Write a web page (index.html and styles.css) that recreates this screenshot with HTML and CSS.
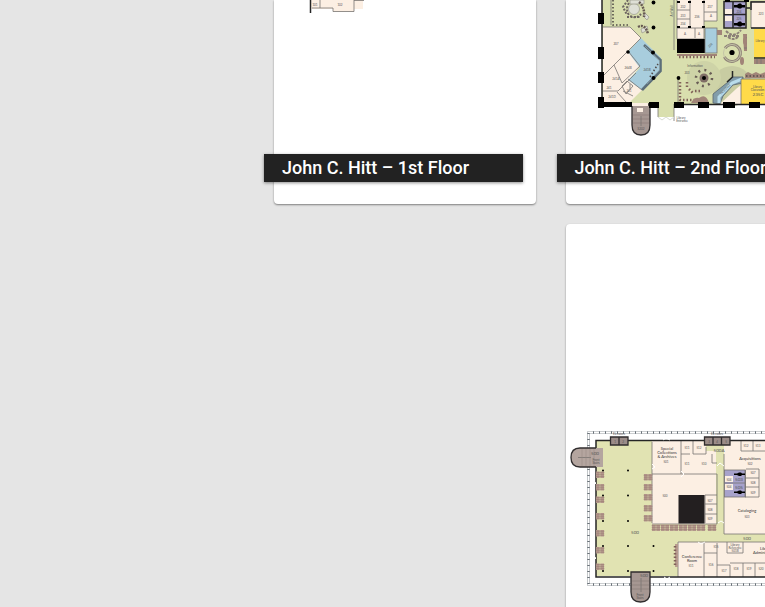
FILE: index.html
```
<!DOCTYPE html>
<html lang="en">
<head>
<meta charset="utf-8">
<title>Floor Maps</title>
<link rel="stylesheet" href="styles.css">
</head>
<body>
<main class="floors">
  <article class="card first">
    <svg class="map" viewBox="274 0 262 154">
      <path class="room" d="M310 0H363V9H354V11.500H333V9H310Z"/>
      <path class="wall" d="M310.500 0V13"/><path class="line" d="M320 0V8M354 0V11.500H333V8H312M354 .5H364"/>
      <text x="315" y="6" class="tiny">101</text><text x="340" y="6" class="tiny">102</text>
    </svg>
    <h2 class="title">John C. Hitt – 1st Floor</h2>
  </article>

  <article class="card second">
    <svg class="map" viewBox="566 0 262 154">
      <path class="green2" d="M602 0H828V104H674V117H658V104H602Z"/>
      <circle cx="732" cy="86" r="20" fill="#c8cca2"/><circle cx="704" cy="78" r="17" fill="#ced3a7"/>
      <!-- west rooms -->
      <path class="room" d="M603 27H630L641 38L628 51L640 66L629 80L642 90L629 103H603Z"/>
      <path class="blue" d="M641 38L661 58V71L642 90L628 80L640 68L628 52Z"/>
      <path class="line" d="M603 27H630L641 38L603 76M628 51L640 66L622 83L614 65M603 91H618L636 73M617 92L626 102M628 79L642 90"/>
      <path d="M644 45L660.500 60V71L642 90" fill="none" stroke="#5c6e79" stroke-width="2.600"/>
      <path d="M645 46L659.500 60.500V70L647 84" fill="none" stroke="#91a6ae" stroke-width=".7"/>
      <path class="wall dots" d="M650 77L658 64"/>
      <path class="line" d="M622 86L627 81L633 86L626 94ZM630 84V89M623 91L633 96"/>
      <g class="tiny"><text x="616" y="45">207</text><text x="628" y="69">264B</text><text x="616" y="80">241A</text><text x="612" y="98">241D</text><text x="647" y="71">241B</text><text x="629" y="92">241</text><text x="609" y="89">241</text><text x="687" y="74">203</text></g>
      <!-- reading area -->
      <path class="line" d="M611 0V25M674 0V50M678 80V103"/>
      <path class="wall dots" d="M613 0V25H629"/>
      <path d="M629 3q-4 6 0 12q7 5 12-1M627 17h13M628 0l-5 7l4 8" fill="none" stroke="#6c6460" stroke-width="2" stroke-dasharray="2 1.500"/>
      <circle cx="634" cy="9" r="5.500" class="sofa"/><path class="sofa" d="M630 0h14v4h-14zM645 13l4 4l-2 3l-4-4zM641 29l6-3l1 4l-6 3z"/>
      <path d="M639 2q6 5 5 15M638 27q7-4 10 7" fill="none" stroke="#675a52" stroke-width="2.500" stroke-dasharray="2 1"/>
      <g class="black"><circle cx="653.500" cy="2.500" r="1.900"/><circle cx="653.500" cy="27.500" r="1.900"/><circle cx="653" cy="52.500" r="2"/><circle cx="628" cy="52" r="1.800"/><circle cx="653.500" cy="78" r="2"/><circle cx="678.500" cy="78" r="1.900"/></g>
      <!-- central core -->
      <path class="room" d="M677 0H704V39H677ZM704 0H717V21H704Z"/>
      <path class="line" d="M677 0V39H704V0M690 0V27M677 10H690M677 19H690M677 28H704M695 28V38M704 21H717V0M704 12H717"/>
      <g class="black"><path d="M677 1h3v2h-3zM688 1h3v2h-3zM702 1h3v2h-3zM677 26h3v2h-3zM688 26h3v2h-3zM702 26h3v2h-3z"/></g>
      <rect class="black" x="677" y="39" width="28" height="14"/><rect class="blue edge" x="705" y="28" width="12" height="25"/>
      <path class="brown" d="M677 54h40v2h-40zM717 30h5v5h-5z"/><path class="brown dots" d="M679 57H715"/>
      <g class="tiny"><text x="697" y="18">236</text><text x="710" y="8">237</text><text x="711" y="17">A</text><text x="683" y="8">232</text><text x="683" y="17">233</text><text x="683" y="25">234</text><text x="685" y="35">A</text><text x="699" y="35">A</text><text x="711" y="46" transform="rotate(-45 711 46)">238</text><text x="695" y="67">Information</text></g>
      <rect class="purple" x="724.500" y="1.500" width="21" height="26"/><path class="wall" d="M724 1.500H746V28H724ZM724 14.500H746M733 2V28"/><path class="room" d="M725 9h7v5h-7zM725 16h7v5h-7z"/>
      <path class="black" d="M734 5h3l2-1.500h2l1 1.500h3v2.500h-3l-1 1h-2l-2-1h-3zM734 23h3l2-1.500h2l1 1.500h3v2.500h-3l-1 1h-2l-2-1h-3z"/>
      <g class="tiny"><text x="739" y="13">224</text><text x="739" y="20">225</text></g>
      <path class="room edge" d="M751 1.500H828V28H751Z"/><path class="yellow" d="M754 29H828V58H754Z"/><path class="wall" d="M746 8h4M751 10v-8h15M751 28h15M754 58h12"/>
      <path class="brown" d="M754 59h11v5h-11zM743 34h4v17h-3z"/><path class="line" d="M757 59v5M761 59v5M744 38h3M744 43h3M744 48h3"/>
      <circle cx="732" cy="53" r="8.500" fill="none" stroke="#8f8379" stroke-width="3" stroke-dasharray="44 10" transform="rotate(-145 732 53)"/><circle cx="732" cy="53" r="8.500" fill="none" stroke="#c5c5a7" stroke-width="1"/><circle cx="732" cy="52.500" r="2.600" class="black"/>
      <path d="M726 31q8 8 15-1M728 37q5 4 10 0M724 36h16" fill="none" stroke="#8c8178" stroke-width="2" stroke-dasharray="3 1"/>
      <ellipse cx="745" cy="41" rx="2" ry="4" class="brown"/><ellipse cx="742" cy="61" rx="2" ry="4" class="brown"/>
      <text x="761" y="15" class="tiny">223</text><text x="760" y="42" class="tiny">Library</text>
      <!-- south side -->
      <circle cx="704" cy="78" r="8" fill="none" stroke="#685c55" stroke-width="2.500" stroke-dasharray="2 4.300"/><circle cx="704" cy="78" r="4.500" fill="#806e66"/><circle cx="704" cy="78" r="2" class="black"/>
      <path class="brown dots" d="M680 82V100H705M687 82v5M689 89l4 4M695 91h7"/><path d="M691 103q3-6 8-5q7-5 10 5z" class="brown"/>
      <path class="room" d="M720 104L736 89L742 84V104Z"/><path d="M713 103V94L728 82L733 77H743V83L733 85L723 96L720 104Z" fill="#829daa" stroke="#59666e" stroke-width=".8"/>
      <path d="M719 103V97L732 83L742 79" fill="none" stroke="#b9dceb" stroke-width="3"/><path class="wall" d="M732.500 71V77L727 82"/><text x="726" y="90" class="tiny" transform="rotate(-45 726 90)">Help Desk</text>
      <path class="yellow" d="M741 79H828V104H741Z"/><path class="line" d="M741 104V79H766"/><path class="brown" d="M745 78V74l3-2l4 2l4-2l4 2l6-2v6Z"/><path class="wall dots" d="M746 76h18"/>
      <text x="757.500" y="87.500" class="tiny">Library</text><text x="757.500" y="90.500" class="tiny">Classroom</text><text x="758" y="95.500" class="medium">235C</text>
      <path class="stairs" d="M632 105H650V125q0 10-9 10t-9-10Z"/><path class="room" d="M632 103H648V106H632ZM637 108h6v4h-6z"/><path class="line" d="M641 116v10"/><path d="M633 115h16M633 119h16M633 123h16" stroke="#83736f" stroke-width=".5"/><text x="641" y="130" class="tiny">S202</text>
      <path class="wall" d="M602 0V104H632M648 104H658M674 104.500H828"/><path class="line" d="M658 104v13M674 104v17"/>
      <path class="black" d="M598 13h6v11h-6zM598 47h6v12h-6zM598 72h6v11h-6zM598 97h6v11h-6zM604 102h28v5h-28zM649 102h10v6h-10zM674 102h10v6h-10zM698 102h11v6h-11zM723 102h12v6h-12zM749 102h11v6h-11zM725 0h5v2h-5zM744 0h5v2h-5z"/>
      <path d="M658 117l4 3l4-3l4 3l4-3" fill="none" stroke="#d8dcd4"/><text x="681" y="119" class="tiny">Library</text><text x="682" y="122" class="tiny">Entrance</text><text x="673" y="11" class="tiny" transform="rotate(-90 673 11)">Art Wall</text>
    </svg>
    <h2 class="title">John C. Hitt – 2nd Floor</h2>
  </article>

  <article class="card third">
    <svg class="map" viewBox="566 224 262 400">
      <defs><g id="desk"><path class="desk" d="M0 0h3.700v6.500h-3.700zM4.300 0h3.700v6.500h-3.700z"/><path d="M-.3 3.200h8.600M-.5 1.200h9M-.5 5.200h9" stroke="#8a6d64" stroke-width=".5"/></g></defs>
      <path d="M828 432.500H588.500V584.500H828" fill="none" stroke="#a4a9ad" stroke-width="2.500"/><path d="M828 432.500H588.500V584.500H828" fill="none" stroke="#fff" stroke-width="1.300"/><path d="M828 432.500H588.500V584.500H828" fill="none" stroke="#697178" stroke-width="2.500" stroke-dasharray="1 5"/>
      <path class="green3" d="M596 441H828V576H596Z"/>
      <path class="room" d="M652 441H706V451H716V524H652ZM724 441H828V534H724ZM678 542H828V577H678Z"/>
      <path class="line" d="M652 523V442M652 474H717V524H652M681 441V474M693 441V454H706V447M681 454H690M712 454V463H717M741 441V451H765M753 441V451M724 454V534H828M828 542H678V577M704 542V577M704 553H717V543M717 553V577M727 542V553H743V542M717 565H730V577M730 563H828M743 563V577M755 563V577M705 495V523M705 495H717M705 504H717M705 514H717"/>
      <rect class="purple edge" x="724.500" y="470" width="21" height="27"/><path class="line" d="M745 470V497H759V469H746M745 478H759M745 487H759M724 483H745"/><path class="room" d="M725 476h8v6h-8zM725 484h8v6h-8z"/>
      <path class="black" d="M734 473.500h3l2-1h2l1 1h3v1.500h-3l-1 1h-2l-2-1h-3zM734 491.500h3l2-1h2l1 1h3v1.500h-3l-1 1h-2l-2-1h-3z"/>
      <rect x="678.500" y="495" width="26" height="28.500" fill="#231f20"/>
      <path class="wall" d="M704 440.500H596V577H631M650 577H828M730 440.500H828"/>
      <!-- elevators -->
      <path d="M610.500 437H628V445H610.500ZM619 437V445M704.500 437H730V445H704.500ZM713 437V445M721.500 437V445" fill="#9b8c88" stroke="#302d2e" stroke-width="1.300"/>
      <path d="M603 448H580q-9 0-9 9.500t9 9.500H603Z" fill="#b4a59f"/><path d="M596 448H580q-9 0-9 9.500t9 9.500H596" fill="none" stroke="#302d2e" stroke-width="1.300"/><path class="line" d="M578 457.500H591"/><path d="M582 449v17M586 449v17M590 449v17M594 449v17" stroke="#948580" stroke-width=".5"/>
      <path class="stairs" d="M631 572H650V592q0 10-9.500 10T631 592Z"/><path class="line" d="M641 578v14"/><path d="M632 581h17M632 585h17M632 589h17" stroke="#887975" stroke-width=".6"/>
      <g><use href="#desk" x="596" y="471.500"/><use href="#desk" x="596" y="484"/><use href="#desk" x="596" y="496.500"/><use href="#desk" x="596" y="513"/><use href="#desk" x="596" y="530"/><use href="#desk" x="596" y="547"/><use href="#desk" x="596" y="563.500"/></g>
      <g><use href="#desk" x="644" y="474"/><use href="#desk" x="644" y="484"/><use href="#desk" x="644" y="494"/><use href="#desk" x="644" y="505"/><use href="#desk" x="644" y="515"/></g>
      <g><use href="#desk" x="652" y="524.500"/><use href="#desk" x="661" y="524.500"/><use href="#desk" x="670" y="524.500"/><use href="#desk" x="679" y="524.500"/><use href="#desk" x="688" y="524.500"/><use href="#desk" x="697" y="524.500"/><use href="#desk" x="708" y="524.500"/></g>
      <path class="desk" d="M675 544h3v23h-3z"/><path class="brown dots" d="M675 546v20"/>
      <g class="black"><circle cx="603" cy="470.500" r="1"/><circle cx="628" cy="470.500" r="1"/><circle cx="603" cy="495.500" r="1"/><circle cx="628" cy="495.500" r="1"/><circle cx="603" cy="521" r="1"/><circle cx="628" cy="521" r="1"/><circle cx="603" cy="546" r="1"/><circle cx="628" cy="546" r="1"/><circle cx="653.500" cy="546" r="1"/><circle cx="603" cy="571" r="1"/><circle cx="628" cy="571" r="1"/><circle cx="653.500" cy="571" r="1"/></g>
      <path d="M593 481l3 2l-3 3M593 556l3 2l-3 3M663 440l3-2l4 2M664 577l3 2l3-2M652 464l3 3l-3 2M681 471l3 3l-3 3M717 466l3-3l4 3M698 542l3 2l4-2M718 523l3-2l3 2" fill="none" stroke="#fff"/>
      <g class="tiny"><text x="619" y="435">Elevators</text><text x="717" y="435">Elevators</text><text x="615" y="443">1</text><text x="623" y="443">2</text><text x="709" y="443">3</text><text x="717" y="443">4</text><text x="726" y="443">5</text><text x="596" y="460.500">Front</text><text x="596" y="464">Stairs</text><text x="640" y="595.500">Front</text><text x="640" y="599">Stairs</text><text x="666" y="463">501</text><text x="687" y="449">511</text><text x="699" y="449">512</text><text x="687" y="465">511</text><text x="704" y="465">510</text><text x="665" y="497">500</text><text x="750" y="465">502</text><text x="747" y="518">503</text><text x="746" y="447">512</text><text x="758" y="447">513</text><text x="753" y="474">507</text><text x="753" y="484">508</text><text x="753" y="494">509</text><text x="729" y="481">504</text><text x="729" y="488">504</text><text x="710" y="502">507</text><text x="710" y="511">508</text><text x="710" y="520">509</text><text x="691" y="567">511</text><text x="716" y="548">515</text><text x="711" y="566">516</text><text x="724" y="572">517</text><text x="736" y="570">518</text><text x="749" y="570">519</text><text x="761" y="570">520</text><text x="735" y="545.500">Library</text><text x="735" y="548.500">Reference</text><text x="735" y="551.500">501B</text></g>
      <g class="small"><text x="667" y="450">Special</text><text x="667" y="454">Collections</text><text x="667" y="458">&amp; Archives</text><text x="750" y="460">Acquisitions</text><text x="747" y="512">Cataloging</text><text x="692" y="558">Conference</text><text x="692" y="562">Room</text><text x="766" y="550">Library</text><text x="766" y="554">Administration</text></g>
      <g class="medium"><text x="595" y="455">500</text><text x="644" y="577">500</text><text x="635" y="534">500</text><text x="719" y="452">500A</text><text x="747" y="540">500</text><text x="739" y="481">503</text><text x="739" y="489">505</text></g>
    </svg>
  </article>
</main>
</body>
</html>
```
FILE: styles.css
```
* { box-sizing: border-box; }
body { margin: 0; background: #e5e5e5; font-family: Roboto, sans-serif; }
.floors { display: grid; grid-template-columns: 262px 262px; grid-template-rows: 204px 400px; column-gap: 30px; row-gap: 20px; width: 100%; height: 607px; padding-left: 274px; overflow: hidden; }
.card { background: #fff; border-radius: 4px; box-shadow: 0 1px 2px rgba(0,0,0,.45); min-width: 0; }
.first, .second { border-top-left-radius: 0; border-top-right-radius: 0; }
.third { grid-column: 2; }
.map { display: block; width: 100%; }
.title { width: 259px; height: 28px; margin: 0 0 0 -10px; padding-left: 18px; background: #222; color: #fff; font-size: 18px; font-weight: 500; line-height: 28px; white-space: nowrap; box-shadow: 0 1px 3px rgba(0,0,0,.45); }
.second .title { margin-left: -9px; padding-left: 17.4px; }
.room { fill: #fcefe3; }
.green2 { fill: #d9dfae; }
.green3 { fill: #e1e3b2; }
.blue { fill: #a8cddd; }
.purple { fill: #a7a2cb; }
.yellow { fill: #ffda49; }
.brown { fill: #a18478; }
.desk { fill: #b79b8f; }
.stairs { fill: #a69792; stroke: #302d2e; stroke-width: 1.3; }
.black { fill: #000; }
.sofa { fill: #dedfd5; stroke: #99988b; stroke-width: .7; }
.wall { fill: none; stroke: #252525; stroke-width: 1.5; }
.line { fill: none; stroke: #777471; stroke-width: .8; }
.edge { stroke: #777471; stroke-width: .8; }
.dots { stroke-dasharray: 1.5 2; }
.brown.dots { fill: none; stroke: #806158; stroke-width: 2.5; }
.wall.dots { stroke-width: 1.6; stroke: #514b48; }
.tiny, .small, .medium { font-family: Lato, sans-serif; text-anchor: middle; fill: #555; }
.tiny { font-size: 3px; }
.small { font-size: 4px; fill: #333; }
.medium { font-size: 4.5px; }
```
